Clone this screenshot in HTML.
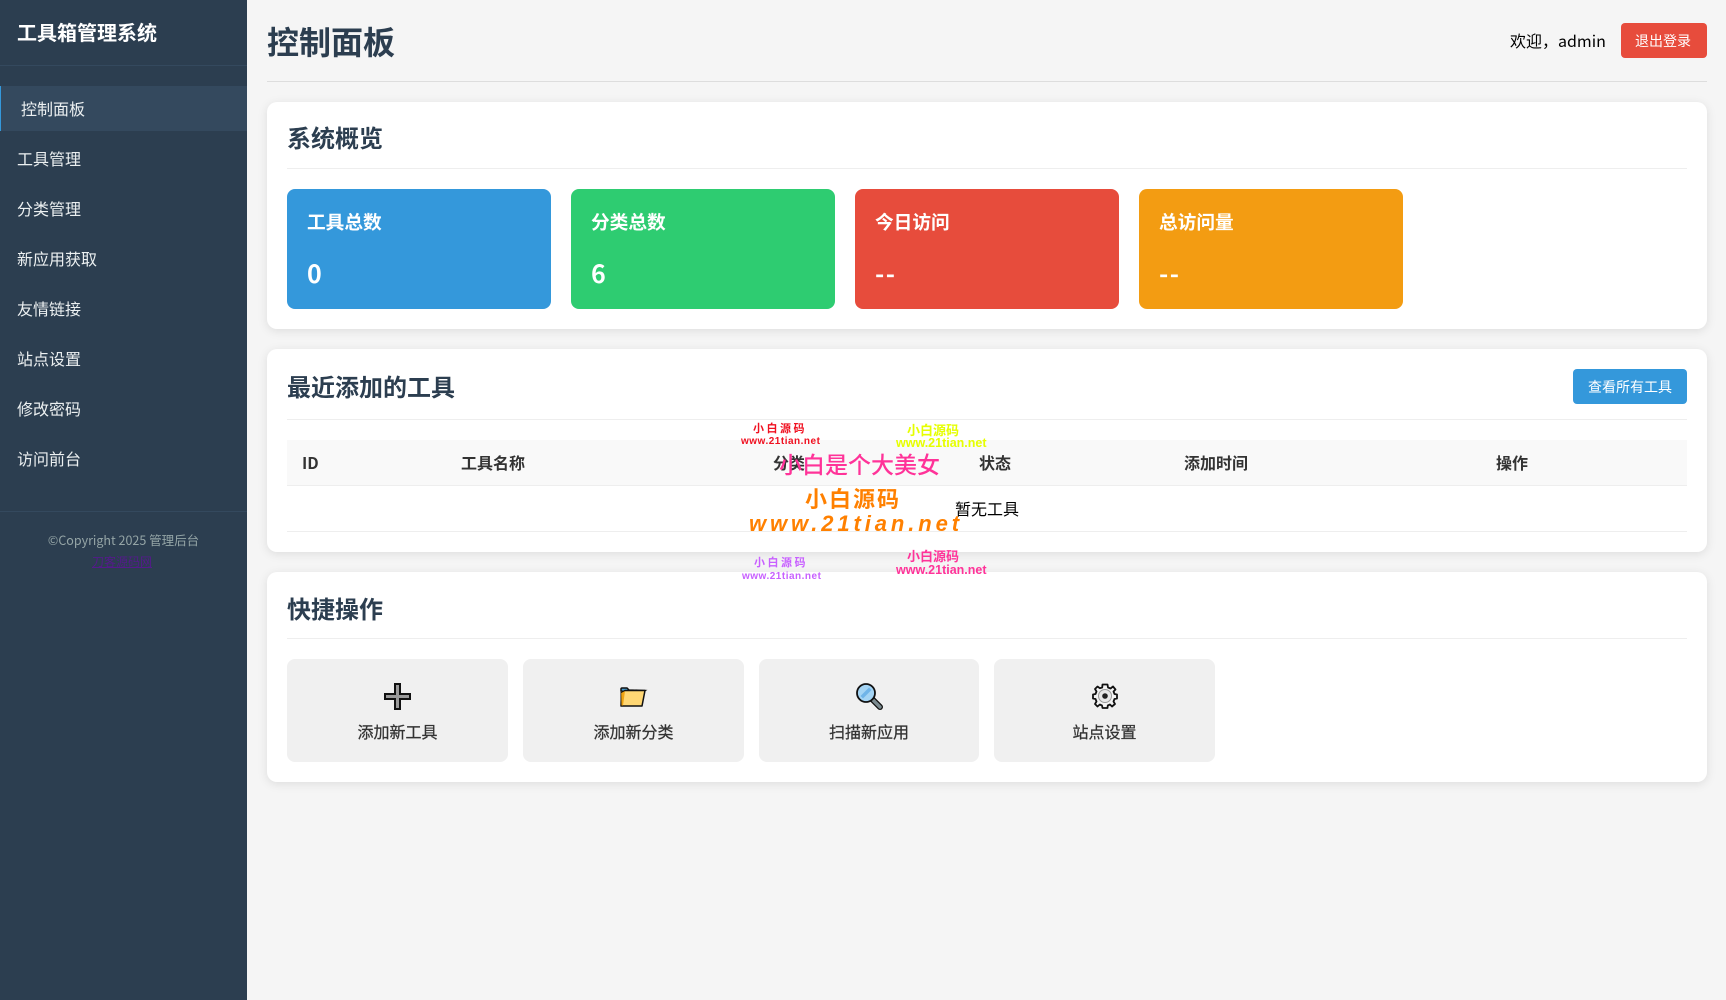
<!DOCTYPE html>
<html lang="zh-CN">
<head>
<meta charset="utf-8">
<title>控制面板</title>
<style>
*{margin:0;padding:0;box-sizing:border-box}
html,body{width:1726px;height:1000px;overflow:hidden;background:#f5f5f5}
body{position:relative;font-family:"Liberation Sans","Noto Sans CJK SC",sans-serif;color:#000}
.t,.l,.b,.c{position:absolute}
.t{white-space:nowrap;line-height:1}
.cjk{font-family:"Noto Sans CJK SC",sans-serif}
#side{position:absolute;left:0;top:0;width:247px;height:1000px;background:#2c3e50}
.m{position:absolute;left:17px;color:#ecf0f1;font-size:16px;line-height:24px;font-family:"Noto Sans CJK SC",sans-serif;white-space:nowrap}
.card{position:absolute;left:267px;width:1440px;background:#fff;border-radius:10px;box-shadow:0 2px 10px rgba(0,0,0,.1)}
.h2{position:absolute;color:#2c3e50;font-size:24px;font-weight:700;line-height:32px;font-family:"Noto Sans CJK SC",sans-serif;white-space:nowrap;left:287px}
.line{position:absolute;height:1px;background:#eee}
.stat{position:absolute;top:189px;width:264px;height:120px;border-radius:8px;color:#fff}
.stat .a{position:absolute;left:20px;top:20px;font-size:18.7px;font-weight:700;line-height:26px;font-family:"Noto Sans CJK SC",sans-serif;white-space:nowrap}
.stat .v{position:absolute;left:20px;top:65px;font-size:25px;font-weight:700;line-height:38px;letter-spacing:1.5px;font-family:"Noto Sans CJK SC",sans-serif}
.th{position:absolute;top:450px;font-size:16px;font-weight:700;line-height:24px;color:#333;font-family:"Noto Sans CJK SC",sans-serif;white-space:nowrap}
.act{position:absolute;top:659px;height:103px;width:221px;background:#f0f0f0;border-radius:8px}
.act span{position:absolute;left:0;right:0;top:60px;text-align:center;font-size:16px;line-height:24px;color:#333;-webkit-text-stroke:.25px #333;font-family:"Noto Sans CJK SC",sans-serif}
svg{position:absolute;overflow:visible}
.w{position:absolute;white-space:nowrap;line-height:1;font-weight:700;font-family:"Liberation Sans",sans-serif}
.z{position:absolute;white-space:nowrap;line-height:1;font-family:"Noto Sans CJK SC",sans-serif;font-weight:700}
</style>
</head>
<body>
<div id="side">
  <div class="t cjk" style="left:17px;top:22px;font-size:20px;font-weight:700;color:#fff;line-height:20px">工具箱管理系统</div>
  <div class="b" style="left:0;top:65px;width:247px;height:1px;background:#34495e"></div>
  <div class="b" style="left:0;top:86px;width:247px;height:45px;background:#34495e;border-left:1px solid #3498db"></div>
  <div class="m" style="left:21px;top:96px">控制面板</div>
  <div class="m" style="top:146px">工具管理</div>
  <div class="m" style="top:196px">分类管理</div>
  <div class="m" style="top:246px">新应用获取</div>
  <div class="m" style="top:296px">友情链接</div>
  <div class="m" style="top:346px">站点设置</div>
  <div class="m" style="top:396px">修改密码</div>
  <div class="m" style="top:446px">访问前台</div>
  <div class="b" style="left:0;top:511px;width:247px;height:1px;background:#34495e"></div>
  <div class="t cjk" style="left:0;width:247px;text-align:center;top:532px;font-size:12.5px;line-height:15px;color:#95a5a6">©Copyright 2025 管理后台</div>
  <div class="t cjk" style="left:92px;top:555px;font-size:12px;line-height:14px;color:#551a8b;text-decoration:underline">刀客源码网</div>
</div>

<div class="t cjk" style="left:267px;top:21px;font-size:32px;font-weight:700;line-height:40px;color:#2c3e50">控制面板</div>
<div class="b" style="left:267px;top:81px;width:1440px;height:1px;background:#ddd"></div>
<div class="t cjk" style="left:1510px;top:28px;font-size:16px;line-height:24px;color:#000">欢迎，admin</div>
<div class="b" style="left:1621px;top:23px;width:86px;height:35px;background:#e74c3c;border-radius:4px"></div>
<div class="t cjk" style="left:1635px;top:33px;font-size:14px;line-height:16px;color:#fff">退出登录</div>

<div class="card" style="top:102px;height:227px"></div>
<div class="h2" style="top:121px">系统概览</div>
<div class="line" style="left:287px;top:168px;width:1400px"></div>
<div class="stat" style="left:287px;background:#3498db"><div class="a">工具总数</div><div class="v">0</div></div>
<div class="stat" style="left:571px;background:#2ecc71"><div class="a">分类总数</div><div class="v">6</div></div>
<div class="stat" style="left:855px;background:#e74c3c"><div class="a">今日访问</div><div class="v">--</div></div>
<div class="stat" style="left:1139px;background:#f39c12"><div class="a">总访问量</div><div class="v">--</div></div>

<div class="card" style="top:349px;height:203px"></div>
<div class="h2" style="top:370px">最近添加的工具</div>
<div class="line" style="left:287px;top:419px;width:1400px"></div>
<div class="b" style="left:1573px;top:369px;width:114px;height:35px;background:#3498db;border-radius:4px"></div>
<div class="t cjk" style="left:1588px;top:379px;font-size:14px;line-height:16px;color:#fff">查看所有工具</div>
<div class="b" style="left:287px;top:440px;width:1400px;height:46px;background:#f9f9f9;border-bottom:1px solid #eee"></div>
<div class="th" style="left:302px">ID</div>
<div class="th" style="left:461px">工具名称</div>
<div class="th" style="left:773px">分类</div>
<div class="th" style="left:979px">状态</div>
<div class="th" style="left:1184px">添加时间</div>
<div class="th" style="left:1496px">操作</div>
<div class="t cjk" style="left:955px;top:496px;font-size:16px;line-height:24px">暂无工具</div>
<div class="line" style="left:287px;top:531px;width:1400px"></div>

<div class="card" style="top:572px;height:210px"></div>
<div class="h2" style="top:592px">快捷操作</div>
<div class="line" style="left:287px;top:638px;width:1400px"></div>

<div class="act" style="left:287px"><span>添加新工具</span></div>
<div class="act" style="left:523px"><span>添加新分类</span></div>
<div class="act" style="left:759px;width:220px"><span>扫描新应用</span></div>
<div class="act" style="left:994px"><span>站点设置</span></div>

<svg style="left:384px;top:683px" width="27" height="27" viewBox="0 0 27 27"><path d="M11 1H16V11H26V16H16V26H11V16H1V11H11Z" fill="#9a9a9a" stroke="#111" stroke-width="2"/></svg>
<svg style="left:620px;top:687px" width="26" height="20" viewBox="0 0 26 20">
  <path d="M1 4V2Q1 1 2 1H7L9 3L25 3.500L21 6H3Z" fill="#4a9ccf" stroke="#111" stroke-width="1.500"/>
  <path d="M1 4H3V19H1Z" fill="#e89b0c" stroke="#111" stroke-width="1"/>
  <path d="M5 3.500H25L22 19H1L1.500 6Z" fill="#ffd774" stroke="#111" stroke-width="1.500" stroke-linejoin="round"/>
  <path d="M1.200 6L5 4L3 18.500H1.500Z" fill="#f0a311"/>
</svg>
<svg style="left:856px;top:683px" width="27" height="27" viewBox="0 0 27 27">
  <path d="M16.500 16.500L24 24" stroke="#111" stroke-width="6" stroke-linecap="round"/>
  <path d="M17.500 17.500L24 24" stroke="#7b8a8f" stroke-width="3.400" stroke-linecap="round"/>
  <circle cx="10" cy="10" r="9" fill="#a4d4f4" stroke="#111" stroke-width="1.800"/>
  <path d="M4.500 13L13 4.500L15.500 7L7 15.500Z" fill="#6fb4e8"/>
</svg>
<svg style="left:1092px;top:683px" width="26" height="26" viewBox="0 0 26 26">
  <path d="M10.500 1.500H15.500L16 4.500L18.500 5.500L21 3.500L23.500 6.500L21.500 8.500L22.500 11L25 11.500V15.500L22.500 16L21.500 18.500L23 21L20 23.500L18 21.500L15.800 22.500L15.500 25H10.500L10 22.500L7.800 21.500L5.500 23.500L3 21L4.500 18.500L3.500 16L1 15.500V11.500L3.500 11L4.500 8.500L3 6L5.500 3.500L7.800 5.200L10.200 4.500Z" fill="#f4f4f4" stroke="#111" stroke-width="1.800" stroke-linejoin="round"/>
  <circle cx="13" cy="13" r="6.500" fill="#e8e8e8" stroke="#999" stroke-width="1"/>
  <circle cx="13" cy="13" r="2.800" fill="#222"/>
</svg>

<div class="z" style="left:753px;top:423px;font-size:11px;letter-spacing:2.500px;color:#f01020">小白源码</div>
<div class="w" style="left:741px;top:437px;font-size:10px;letter-spacing:.5px;color:#f01020">www.21tian.net</div>
<div class="z" style="left:907px;top:423px;font-size:13px;color:#e6ff00">小白源码</div>
<div class="w" style="left:896px;top:437px;font-size:12.500px;color:#e6ff00">www.21tian.net</div>
<div class="t cjk" style="left:779px;top:452px;font-size:23px;font-weight:500;color:#ff3399">小白是个大美女</div>
<div class="z" style="left:805px;top:487px;font-size:22px;letter-spacing:2px;color:#ff8000">小白源码</div>
<div class="w" style="left:749px;top:513px;font-size:22px;letter-spacing:3.900px;font-style:italic;color:#ff8000">www.21tian.net</div>
<div class="z" style="left:754px;top:557px;font-size:11px;letter-spacing:2.500px;color:#c860ff">小白源码</div>
<div class="w" style="left:742px;top:572px;font-size:10px;letter-spacing:.5px;color:#c860ff">www.21tian.net</div>
<div class="z" style="left:907px;top:549px;font-size:13px;color:#ff3399">小白源码</div>
<div class="w" style="left:896px;top:564px;font-size:12.500px;color:#ff3399">www.21tian.net</div>
</body>
</html>
